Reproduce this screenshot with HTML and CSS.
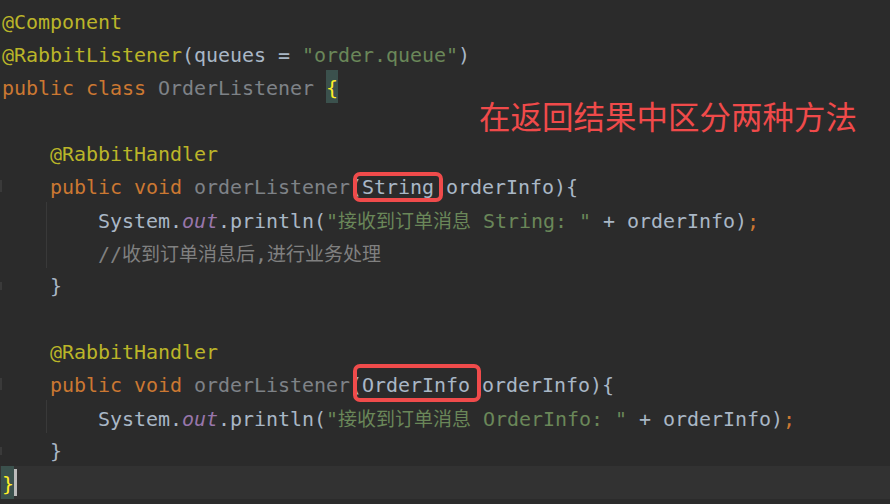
FILE: index.html
```html
<!DOCTYPE html>
<html>
<head>
<meta charset="utf-8">
<link rel="stylesheet" href="styles.css">
</head>
<body>
<div class="editor">
  <div class="line"><span class="ann">@Component</span></div>
  <div class="line"><span class="ann">@RabbitListener</span>(queues = <span class="str">"order.queue"</span>)</div>
  <div class="line"><span class="kw">public class </span><span class="unused">OrderListener </span><span class="brace">{</span></div>
  <div class="line"> </div>
  <div class="line">    <span class="ann">@RabbitHandler</span></div>
  <div class="line fold">    <span class="kw">public void </span><span class="unused">orderListener</span>(<span class="mark mark-a">String</span> orderInfo){</div>
  <div class="line guide">        System.<span class="static">out</span>.println(<span class="str">"<span class="cjk">接收到订单消息</span> String: "</span> + orderInfo)<span class="kw">;</span></div>
  <div class="line guide">        <span class="cmt">//<span class="cjk">收到订单消息后</span>,<span class="cjk">进行业务处理</span></span></div>
  <div class="line fold fold-end">    }</div>
  <div class="line"> </div>
  <div class="line">    <span class="ann">@RabbitHandler</span></div>
  <div class="line fold">    <span class="kw">public void </span><span class="unused">orderListener</span>(<span class="mark mark-b">OrderInfo</span> orderInfo){</div>
  <div class="line guide">        System.<span class="static">out</span>.println(<span class="str">"<span class="cjk">接收到订单消息</span> OrderInfo: "</span> + orderInfo)<span class="kw">;</span></div>
  <div class="line fold fold-end">    }</div>
  <div class="line current"><span class="brace brace-last">}</span><span class="caret"></span></div>
  <div class="note">在返回结果中区分两种方法</div>
</div>
</body>
</html>
```

FILE: styles.css
```css
html, body {
  margin: 0;
  padding: 0;
  background: #2b2b2b;
  overflow: hidden;
}

.editor {
  position: relative;
  width: 890px;
  height: 504px;
  padding-top: 4px;
  box-sizing: border-box;
  font-family: "DejaVu Sans Mono", "Liberation Mono", "Noto Sans CJK SC", monospace;
  font-size: 20px;
  letter-spacing: -0.04px;
  color: #a9b7c6;
}

.line {
  position: relative;
  height: 30px;
  line-height: 30px;
  padding-top: 3px;
  padding-left: 2px;
  white-space: pre;
}

.ann { color: #bbb529; }
.kw { color: #cc7832; }
.str { color: #6a8759; }
.cmt { color: #808080; }
.unused { color: #7e8287; }
.static { color: #9876aa; font-style: italic; }

.cjk {
  font-family: "Noto Sans CJK SC", sans-serif;
  font-size: 19px;
  letter-spacing: 0;
}

.brace {
  display: inline-block;
  height: 33px;
  line-height: 36px;
  margin-top: -3px;
  vertical-align: top;
  background: #3b514d;
  color: #ffef28;
}

.brace-last {
  margin-left: -1px;
  padding-left: 1px;
}

.caret {
  display: inline-block;
  width: 3px;
  height: 27px;
  margin-top: 0;
  vertical-align: top;
  background: #bbbbbb;
}

.current {
  background: #323232;
}

.guide {
  background: linear-gradient(#393939, #393939) no-repeat 46px 0 / 1px 100%;
}

.fold::before {
  content: "";
  position: absolute;
  left: 0;
  top: 11px;
  width: 2px;
  height: 12px;
  background: #3a3a3a;
}

.fold-end::before {
  top: 14px;
  height: 8px;
}

.mark {
  position: relative;
}

.mark::after {
  content: "";
  position: absolute;
  border: 4px solid #f04b4b;
  border-radius: 7px;
}

.mark-a::after {
  left: -9px;
  right: -9px;
  top: -3px;
  bottom: -3px;
}

.mark-b::after {
  left: -9px;
  right: -11px;
  top: -9px;
  bottom: -5px;
}

.note {
  position: absolute;
  left: 479px;
  top: 99px;
  font-family: "Noto Sans CJK SC", sans-serif;
  font-size: 31.5px;
  line-height: 32px;
  letter-spacing: 0;
  color: #f04a4a;
  white-space: nowrap;
}
```
